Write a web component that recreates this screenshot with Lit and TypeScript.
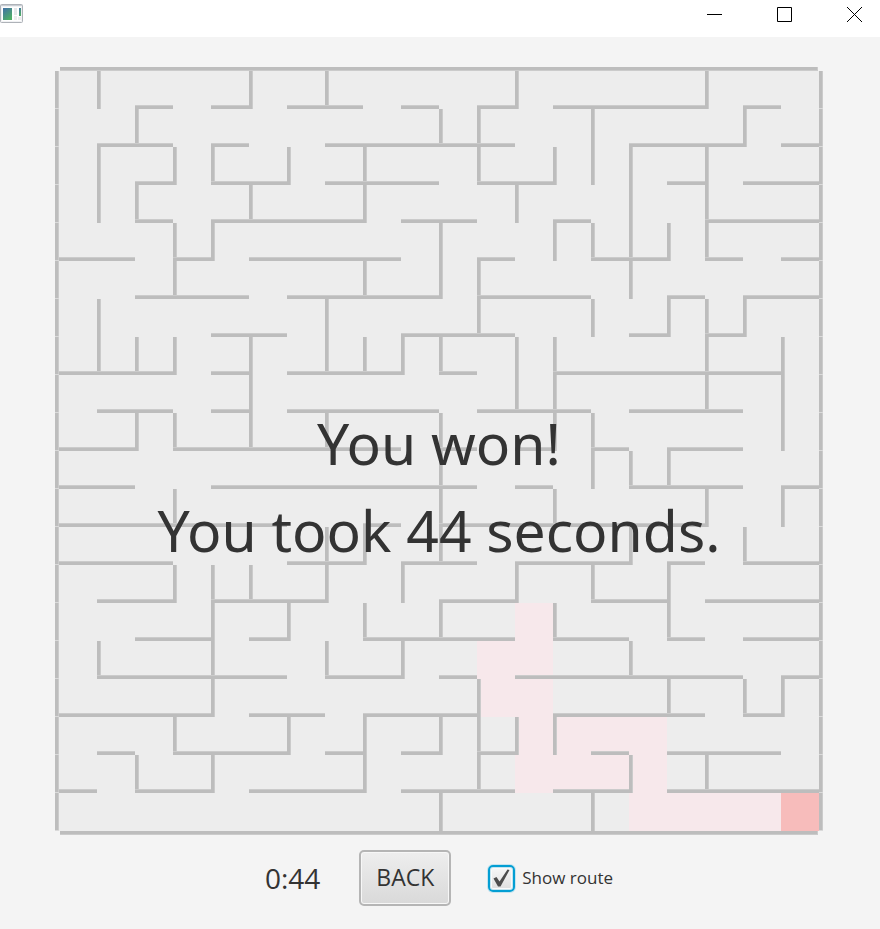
import { LitElement, html, svg, css } from "lit";
import { customElement, property, state } from "lit/decorators.js";

const SIZE = 20;
const CELL = 38;
const WALL = 4;

type Span = [number, number];

// Walls along the bottom edge of each row, as column spans; index 0 is the edge below the first row.
const ROW_WALLS: Span[][] = [
  [[2, 3], [4, 5], [6, 8], [9, 10], [11, 12], [13, 17], [18, 19]],
  [[1, 3], [4, 5], [7, 12], [15, 18], [19, 20]],
  [[2, 3], [4, 6], [7, 10], [11, 13], [16, 17], [18, 20]],
  [[2, 3], [4, 8], [9, 11], [13, 14], [17, 20]],
  [[0, 2], [3, 4], [5, 9], [11, 12], [14, 16], [17, 18], [19, 20]],
  [[2, 5], [6, 10], [11, 14], [16, 17], [18, 20]],
  [[4, 6], [9, 12], [15, 16], [17, 18]],
  [[0, 3], [4, 5], [6, 9], [10, 11], [13, 19]],
  [[1, 3], [4, 5], [6, 10], [11, 14], [15, 18]],
  [[0, 2], [3, 9], [10, 11], [12, 13], [14, 15], [16, 18]],
  [[0, 2], [4, 11], [12, 13], [15, 18], [19, 20]],
  [[0, 6], [8, 9], [10, 17]],
  [[0, 3], [6, 8], [9, 11], [12, 15], [16, 17], [18, 20]],
  [[1, 3], [4, 7], [10, 12], [14, 16], [17, 20]],
  [[2, 4], [5, 6], [8, 12], [13, 15], [16, 17], [18, 20]],
  [[1, 6], [7, 9], [10, 11], [12, 18], [19, 20]],
  [[0, 4], [5, 7], [8, 11], [13, 17], [18, 19]],
  [[1, 2], [3, 6], [7, 8], [9, 10], [11, 12], [14, 15], [16, 19]],
  [[0, 1], [2, 4], [5, 8], [9, 12], [13, 15], [16, 20]],
];

// Walls along the left edge of each column, as row spans; index 0 is the edge left of the second column.
const COLUMN_WALLS: Span[][] = [
  [[0, 1], [2, 4], [6, 8], [15, 16]],
  [[1, 2], [3, 4], [7, 8], [9, 10], [18, 19]],
  [[2, 3], [4, 6], [7, 8], [9, 10], [11, 12], [13, 14], [17, 18]],
  [[2, 3], [4, 5], [13, 17], [18, 19]],
  [[0, 1], [3, 4], [7, 10], [13, 14]],
  [[2, 3], [14, 15], [17, 18]],
  [[0, 1], [6, 8], [9, 10], [12, 14], [15, 16]],
  [[2, 4], [5, 6], [7, 8], [12, 13], [14, 15], [17, 19]],
  [[7, 8], [13, 14], [15, 16]],
  [[1, 2], [4, 6], [7, 8], [9, 13], [14, 15], [17, 18], [19, 20]],
  [[1, 3], [5, 7], [16, 19]],
  [[0, 1], [3, 4], [7, 9], [13, 14], [17, 18]],
  [[2, 3], [4, 5], [7, 10], [11, 12], [14, 15], [17, 18]],
  [[1, 3], [4, 5], [6, 7], [9, 11], [13, 14], [19, 20]],
  [[2, 6], [10, 11], [12, 13], [15, 16], [18, 19]],
  [[4, 5], [6, 7], [10, 11], [13, 15], [16, 17]],
  [[0, 1], [2, 5], [6, 9], [11, 12], [18, 19]],
  [[1, 2], [6, 7], [12, 13], [16, 17]],
  [[7, 10], [11, 12], [16, 17]],
];

// Visited cells as [row, first column, last column].
const ROUTE: [number, number, number][] = [
  [14, 12, 12],
  [15, 11, 12],
  [16, 11, 12],
  [17, 12, 15],
  [18, 12, 15],
  [19, 15, 18],
];

@customElement("title-bar")
class TitleBar extends LitElement {
  static styles = css`
    :host {
      display: flex;
      justify-content: space-between;
      align-items: flex-start;
      height: 37px;
      background: #fff;
    }
    .app-icon {
      display: block;
      margin-top: 4px;
    }
    .controls {
      display: flex;
      gap: 24px;
      padding-right: 3px;
    }
    button {
      width: 46px;
      height: 29px;
      padding: 0;
      border: 0;
      background: none;
      display: grid;
      place-items: center;
    }
    button svg {
      display: block;
      fill: none;
      stroke: #000;
    }
  `;

  render() {
    return html`
      <svg class="app-icon" width="23" height="19" viewBox="0 0 23 19" aria-hidden="true">
        <defs>
          <linearGradient id="screen" x1="0" y1="0" x2="0.6" y2="1">
            <stop offset="0" stop-color="#426fa8" />
            <stop offset="1" stop-color="#4fae66" />
          </linearGradient>
        </defs>
        <rect x="0.5" y="0.5" width="22" height="18" rx="1" fill="#f0f1f3" stroke="#aeb2b8" />
        <path d="M1 1.5h21" stroke="#c9cdd3" />
        <rect x="2" y="3" width="19" height="14" fill="#fff" />
        <rect x="3" y="4" width="9" height="12" fill="url(#screen)" />
        <rect x="14" y="4" width="3" height="7" fill="#e6e8ea" />
        <rect x="14" y="12" width="3" height="4" fill="#ededee" />
        <rect x="19" y="4" width="2" height="8" fill="url(#screen)" />
        <rect x="18" y="13" width="3" height="3" fill="#ededee" />
      </svg>
      <div class="controls">
        <button aria-label="Minimize">
          <svg width="15" height="15"><path d="M0 7.5h15" /></svg>
        </button>
        <button aria-label="Maximize">
          <svg width="15" height="15"><path d="M0.5 0.5h14v14h-14z" /></svg>
        </button>
        <button aria-label="Close">
          <svg width="15" height="15"><path d="M0 0l15 15M15 0l-15 15" /></svg>
        </button>
      </div>
    `;
  }
}

@customElement("maze-board")
class MazeBoard extends LitElement {
  @property({ type: Boolean }) showRoute = false;

  static styles = css`
    :host {
      display: block;
    }
    svg {
      display: block;
      width: 100%;
      height: auto;
      shape-rendering: crispEdges;
    }
    .floor {
      fill: #ededed;
    }
    .wall {
      fill: #bdbdbd;
    }
    .edge {
      fill: #cbcbcb;
    }
    .joint {
      fill: #dadada;
    }
    .route {
      fill: #f7e8eb;
    }
    .goal {
      fill: #f7bcbb;
    }
  `;

  private across(x: number, y: number, width: number) {
    return svg`
      <rect class="edge" x=${x} y=${y} width=${width} height="1" />
      <rect class="wall" x=${x} y=${y + 1} width=${width} height="3" />`;
  }

  private down(x: number, y: number, height: number) {
    return svg`
      <rect class="wall" x=${x} y=${y} width="3" height=${height} />
      <rect class="edge" x=${x + 3} y=${y} width="1" height=${height} />`;
  }

  private side(x: number, row: number) {
    const y = WALL + row * CELL;
    return svg`
      <rect class="joint" x=${x} y=${y} width=${WALL} height=${CELL} />
      ${this.down(x, y, CELL - 1)}`;
  }

  render() {
    const span = SIZE * CELL;
    const rows = Array.from({ length: SIZE }, (_, row) => row);
    return html`
      <svg viewBox="0 0 768 768" role="img" aria-label="Maze">
        <rect class="floor" x="4" y="4" width=${span} height=${span} />
        ${this.showRoute
          ? ROUTE.map(
              ([row, first, last]) => svg`<rect class="route" x=${WALL + first * CELL}
                y=${WALL + row * CELL} width=${(last - first + 1) * CELL} height=${CELL} />`
            )
          : null}
        <rect class="goal" x=${WALL + 19 * CELL} y=${WALL + 19 * CELL} width=${CELL} height=${CELL} />
        ${COLUMN_WALLS.map((spans, i) =>
          spans.map(([a, b]) => this.down(WALL + (i + 1) * CELL, WALL + a * CELL, (b - a) * CELL))
        )}
        ${ROW_WALLS.map((spans, i) =>
          spans.map(([a, b]) => this.across(WALL + a * CELL, (i + 1) * CELL, (b - a) * CELL))
        )}
        ${rows.map((row) => [this.side(0, row), this.side(WALL + span, row)])}
        ${[0, span + WALL].map(
          (y) => svg`
            <rect class="edge" x="5" y=${y} width="758" height="4" />
            <rect class="wall" x="5" y=${y} width="757" height="3" />`
        )}
      </svg>
    `;
  }
}

@customElement("app-root")
class AppRoot extends LitElement {
  @state() private showRoute = true;

  static styles = css`
    :host {
      display: flex;
      flex-direction: column;
      min-height: 100vh;
      background: #f4f4f4;
      color: #333;
      font-family: "Open Sans", "Noto Sans", sans-serif;
    }
    main {
      flex: 1;
      padding: 30px 57px 0 55px;
    }
    .stage {
      position: relative;
    }
    .message {
      position: absolute;
      inset: 0;
      display: flex;
      flex-direction: column;
      align-items: center;
      justify-content: center;
      padding-top: 72px;
      margin: 0;
      font-family: "Noto Sans", sans-serif;
      font-size: 57px;
      font-weight: 400;
      line-height: 87px;
      text-align: center;
    }
    .toolbar {
      display: flex;
      align-items: center;
      justify-content: center;
      margin-top: 15px;
    }
    .time {
      font-size: 28px;
      line-height: 40px;
      margin-right: 39px;
    }
    .back {
      width: 92px;
      height: 56px;
      padding: 0 0 2px;
      margin-right: 37px;
      border: 2px solid #b5b5b5;
      border-radius: 5px;
      background: linear-gradient(#eeeeee, #d9d9d9);
      box-shadow: inset 0 0 0 1px #f7f7f7;
      color: inherit;
      font: 23px "Open Sans", sans-serif;
    }
    .option {
      display: flex;
      align-items: center;
      gap: 7px;
      font-size: 17px;
      line-height: 24px;
    }
    .tick {
      display: grid;
      place-items: center;
    }
    .tick > * {
      grid-area: 1 / 1;
    }
    .tick input {
      appearance: none;
      width: 27px;
      height: 27px;
      margin: 0;
      border: 2px solid #039ed3;
      border-radius: 5px;
      background: linear-gradient(#f8f8f8, #dedede);
      box-shadow: 0 0 0 1px #c5e4ef, inset 0 0 0 1px #c5e4ef, inset 0 0 0 2px #fafafa;
    }
    .tick svg {
      pointer-events: none;
      position: relative;
      fill: #4d4d4d;
      visibility: hidden;
    }
    .tick input:checked + svg {
      visibility: visible;
    }
  `;

  render() {
    return html`
      <title-bar></title-bar>
      <main>
        <div class="stage">
          <maze-board .showRoute=${this.showRoute}></maze-board>
          <p class="message"><span>You won!</span><span>You took 44 seconds.</span></p>
        </div>
        <div class="toolbar">
          <span class="time">0:44</span>
          <button class="back">BACK</button>
          <label class="option">
            <span class="tick">
              <input
                type="checkbox"
                .checked=${this.showRoute}
                @change=${(e: Event) => (this.showRoute = (e.target as HTMLInputElement).checked)}
              />
              <svg width="17" height="18" viewBox="0 0 17 18" aria-hidden="true">
                <path d="M0.5 9.500L3.500 8L6.500 12.500L14.500 0.500L16.500 1L7.500 17.500L5 17.500Z" />
              </svg>
            </span>
            <span>Show route</span>
          </label>
        </div>
      </main>
    `;
  }
}
